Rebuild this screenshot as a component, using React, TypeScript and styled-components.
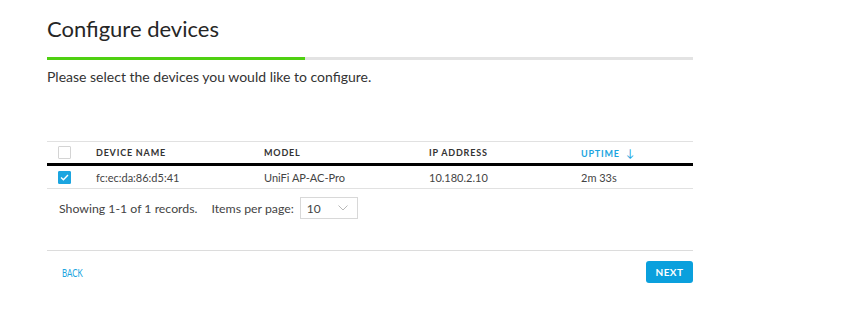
import React from 'react';
import styled, { createGlobalStyle } from 'styled-components';

const GlobalStyle = createGlobalStyle`
  body {
    margin: 0;
    background: #fff;
    font-family: 'Lato', 'Liberation Sans', sans-serif;
    color: #333;
  }
`;

const Page = styled.div`
  width: 646px;
  padding: 14px 0 0 47px;
`;

const Title = styled.h1`
  margin: 0;
  font-size: 22px;
  font-weight: 400;
  line-height: 30px;
  color: #262626;
`;

const Progress = styled.div`
  height: 3px;
  margin-top: 13px;
  background: #e3e3e3;
`;

const ProgressFill = styled.div`
  height: 100%;
  background: #4fd011;
`;

const Subtitle = styled.p`
  margin: 8px 0 0;
  font-size: 14px;
  line-height: 18px;
  color: #333;
`;

const Table = styled.table`
  width: 100%;
  margin-top: 55px;
  border-collapse: collapse;
  font-size: 11px;
`;

const HeadCell = styled.th<{ active?: boolean }>`
  text-align: left;
  padding: 0;
  height: 21px;
  font-size: 9px;
  font-weight: 700;
  letter-spacing: 0.8px;
  color: ${({ active }) => (active ? '#1ba5e0' : '#333')};
  border-top: 1px solid #e1e1e1;
  border-bottom: 3px solid #000;
`;

const Cell = styled.td`
  padding: 0;
  height: 22px;
  color: #444;
  border-bottom: 1px solid #e1e1e1;
`;

const Box = styled.span<{ checked?: boolean }>`
  display: inline-flex;
  align-items: center;
  justify-content: center;
  box-sizing: border-box;
  width: 13px;
  height: 13px;
  margin-left: 11px;
  vertical-align: middle;
  border-radius: 1px;
  border: 1px solid ${({ checked }) => (checked ? '#1ba5e0' : '#d4d4d4')};
  background: ${({ checked }) => (checked ? '#1ba5e0' : '#fff')};
`;

const Arrow = styled.span`
  margin-left: 6px;
  font-weight: 400;
  font-size: 11px;
`;

const Pager = styled.div`
  display: flex;
  align-items: center;
  height: 38px;
  padding-left: 12px;
  font-size: 12.3px;
  color: #444;
`;

const PerPage = styled.span`
  margin-left: 14px;
`;

const Select = styled.div`
  display: flex;
  align-items: center;
  justify-content: space-between;
  box-sizing: border-box;
  width: 58px;
  height: 22px;
  margin-left: 6px;
  padding: 0 9px 0 6px;
  font-size: 12px;
  border: 1px solid #d8d8d8;
`;

const Footer = styled.div`
  display: flex;
  justify-content: space-between;
  align-items: center;
  margin-top: 23px;
  padding-top: 10px;
  border-top: 1px solid #dcdcdc;
`;

const LinkButton = styled.button`
  border: 0;
  background: none;
  padding: 0 0 0 15px;
  font-family: inherit;
  font-size: 11px;
  color: #1ba5e0;
`;

const Narrow = styled.span`
  display: inline-block;
  transform: scaleX(0.72);
  transform-origin: left center;
`;

const PrimaryButton = styled.button`
  border: 0;
  width: 47px;
  height: 22px;
  border-radius: 3px;
  background: #0aa0dd;
  color: #fff;
  font-family: inherit;
  font-size: 10px;
  font-weight: 700;
  letter-spacing: 0.4px;
`;

const Check = () => (
  <svg width="9" height="7" viewBox="0 0 9 7">
    <path d="M1 3.6 L3.4 5.8 L8 1" stroke="#fff" strokeWidth="1.4" fill="none" />
  </svg>
);

const Chevron = () => (
  <svg width="10" height="6" viewBox="0 0 10 6">
    <path d="M0.5 0.5 L5 5 L9.5 0.5" stroke="#b8b8b8" strokeWidth="1" fill="none" />
  </svg>
);

export default function App() {
  return (
    <Page>
      <GlobalStyle />
      <Title>Configure devices</Title>
      <Progress>
        <ProgressFill style={{ width: `${(258 / 646) * 100}%` }} />
      </Progress>
      <Subtitle>Please select the devices you would like to configure.</Subtitle>
      <Table>
        <colgroup>
          <col style={{ width: 49 }} />
          <col style={{ width: 168 }} />
          <col style={{ width: 165 }} />
          <col style={{ width: 152 }} />
          <col />
        </colgroup>
        <thead>
          <tr>
            <HeadCell><Box /></HeadCell>
            <HeadCell>DEVICE NAME</HeadCell>
            <HeadCell>MODEL</HeadCell>
            <HeadCell>IP ADDRESS</HeadCell>
            <HeadCell active>UPTIME<Arrow>↓</Arrow></HeadCell>
          </tr>
        </thead>
        <tbody>
          <tr>
            <Cell><Box checked><Check /></Box></Cell>
            <Cell>fc:ec:da:86:d5:41</Cell>
            <Cell>UniFi AP-AC-Pro</Cell>
            <Cell>10.180.2.10</Cell>
            <Cell>2m 33s</Cell>
          </tr>
        </tbody>
      </Table>
      <Pager>
        <span>Showing 1-1 of 1 records.</span>
        <PerPage>Items per page:</PerPage>
        <Select>
          <span>10</span>
          <Chevron />
        </Select>
      </Pager>
      <Footer>
        <LinkButton><Narrow>BACK</Narrow></LinkButton>
        <PrimaryButton>NEXT</PrimaryButton>
      </Footer>
    </Page>
  );
}
